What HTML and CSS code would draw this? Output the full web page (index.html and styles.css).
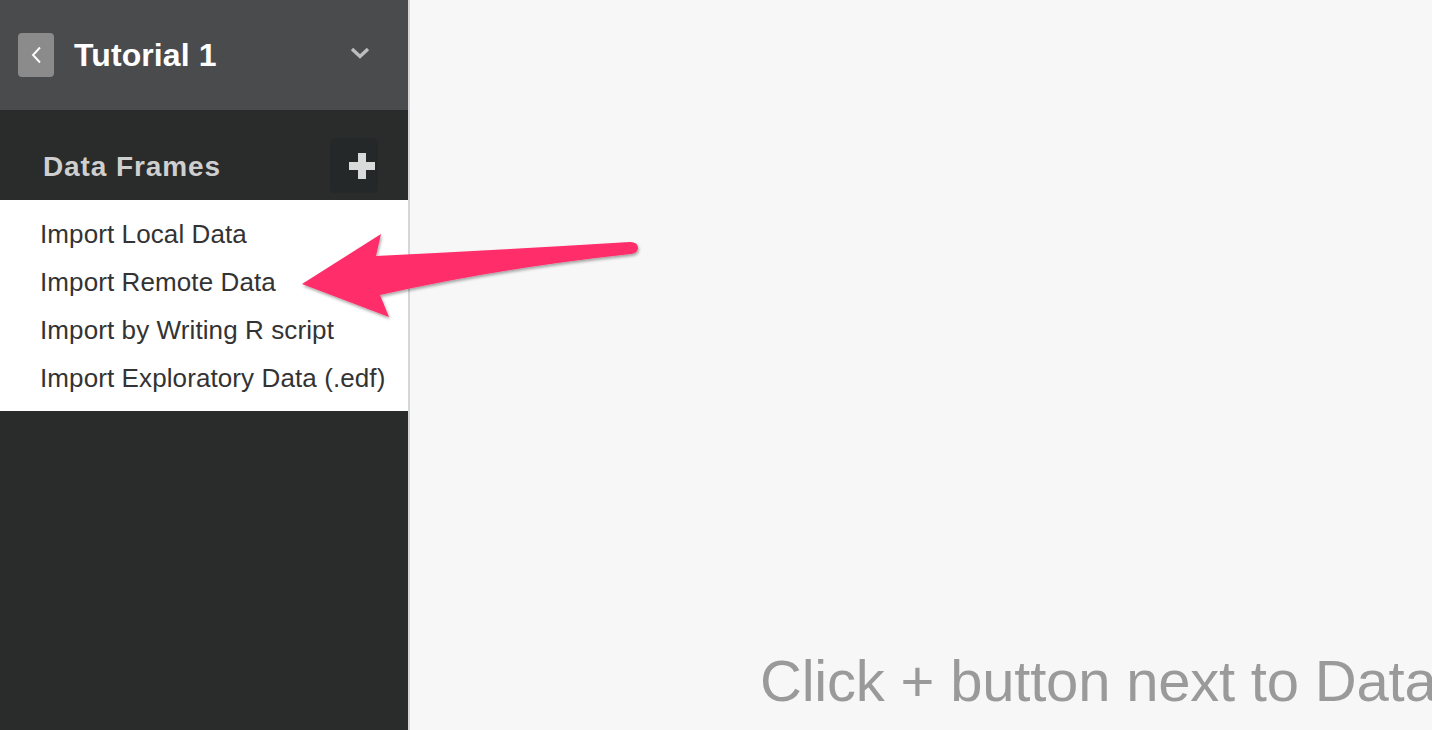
FILE: index.html
```html
<!DOCTYPE html>
<html>
<head>
<meta charset="utf-8">
<link rel="stylesheet" href="styles.css">
</head>
<body>
<div class="app">
  <aside class="sidebar">
    <header class="project-bar">
      <button class="back-btn" aria-label="Back">
        <svg width="12" height="18" viewBox="0 0 12 18"><path d="M10 1.5 L3 9 L10 16.5" fill="none" stroke="#fff" stroke-width="1.9"/></svg>
      </button>
      <h1 class="project-title">Tutorial 1</h1>
      <svg class="caret" width="20" height="12" viewBox="0 0 20 12"><path d="M2 2 L10 9.5 L18 2" fill="none" stroke="#bdbdbd" stroke-width="3.4"/></svg>
    </header>
    <section class="section-head">
      <h2 class="section-title">Data Frames</h2>
      <button class="add-btn" aria-label="Add">
        <svg width="26" height="26" viewBox="0 0 26 26"><path d="M9 0h8v9h9v8h-9v9h-8v-9h-9v-8h9z" fill="#d9dbdb"/></svg>
      </button>
    </section>
    <ul class="menu">
      <li>Import Local Data</li>
      <li>Import Remote Data</li>
      <li>Import by Writing R script</li>
      <li>Import Exploratory Data (.edf)</li>
    </ul>
  </aside>
  <main class="main">
    <p class="hint">Click + button next to Data Frames to import data.</p>
  </main>
  <svg class="arrow" width="400" height="140" viewBox="290 215 400 140">
    <defs>
      <filter id="sh" x="-10%" y="-20%" width="120%" height="140%">
        <feDropShadow dx="1" dy="2" stdDeviation="1.5" flood-color="#000" flood-opacity="0.35"/>
      </filter>
    </defs>
    <path d="M302 284 L381 234 L376 256 Q500 250 630 242 Q638 242 638 248 Q638 253 631 254 Q500 268 380 295 L389 317 Z" fill="#ff2d6b" filter="url(#sh)"/>
  </svg>
</div>
</body>
</html>
```
FILE: styles.css
```css
html, body {
  margin: 0;
  padding: 0;
  height: 100%;
}
body {
  font-family: "Liberation Sans", Arial, sans-serif;
  background: #f7f7f7;
  overflow: hidden;
}
.app {
  display: flex;
  height: 730px;
  position: relative;
}
.sidebar {
  width: 408px;
  flex: none;
  background: #2a2b2b;
  border-right: 2px solid #d6d6d6;
  display: flex;
  flex-direction: column;
}
.project-bar {
  height: 110px;
  background: #4a4b4d;
  display: flex;
  align-items: center;
  padding: 0 38px 0 18px;
  box-sizing: border-box;
}
.back-btn {
  width: 36px;
  height: 44px;
  border: none;
  border-radius: 4px;
  background: #8b8b8b;
  padding: 0;
  display: flex;
  align-items: center;
  justify-content: center;
}
.project-title {
  margin: 0 0 0 20px;
  flex: 1;
  font-size: 32px;
  font-weight: bold;
  color: #ffffff;
  letter-spacing: 0.1px;
}
.caret {
  margin-top: -4px;
}
.section-head {
  height: 90px;
  display: flex;
  align-items: center;
  padding: 0 30px 0 43px;
  box-sizing: border-box;
}
.section-title {
  margin: 0;
  flex: 1;
  font-size: 28px;
  font-weight: bold;
  color: #cfcfcf;
  letter-spacing: 0.9px;
  margin-top: 23px;
}
.add-btn {
  width: 48px;
  height: 55px;
  border: none;
  border-radius: 5px;
  background: #252828;
  padding: 0 3px 0 0;
  display: flex;
  align-items: center;
  justify-content: flex-end;
  margin-top: 21px;
}
.menu {
  list-style: none;
  margin: 0;
  padding: 10px 0 9px 40px;
  background: #ffffff;
}
.menu li {
  height: 48px;
  line-height: 48px;
  font-size: 26px;
  color: #333333;
  white-space: nowrap;
  letter-spacing: 0.1px;
}
.main {
  flex: 1;
  min-width: 0;
  overflow: hidden;
  position: relative;
}
.hint {
  position: absolute;
  left: 350px;
  top: 647px;
  margin: 0;
  font-size: 58px;
  color: #9a9a9a;
  white-space: nowrap;
  letter-spacing: -0.2px;
}
.arrow {
  position: absolute;
  left: 290px;
  top: 215px;
  overflow: visible;
}
```
